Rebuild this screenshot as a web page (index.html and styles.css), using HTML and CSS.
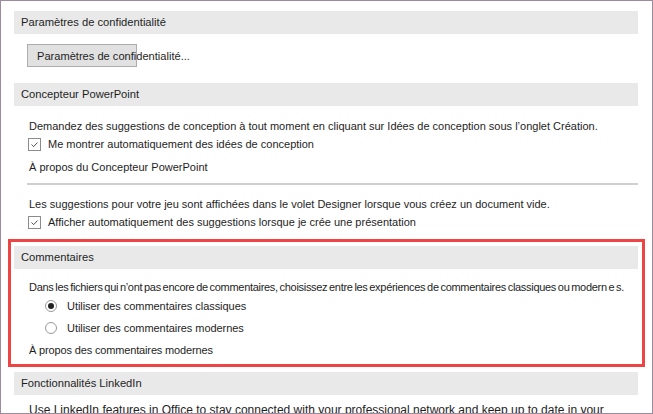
FILE: index.html
```html
<!DOCTYPE html>
<html lang="fr">
<head>
<meta charset="utf-8">
<title>Options</title>
<link rel="stylesheet" href="styles.css">
</head>
<body>
<div class="window">
  <section class="group group-privacy">
    <div class="group-header">Paramètres de confidentialité</div>
    <div class="btn">Paramètres de confidentialité...</div>
  </section>

  <section class="group group-designer">
    <div class="group-header">Concepteur PowerPoint</div>
    <p class="row row-first">Demandez des suggestions de conception à tout moment en cliquant sur Idées de conception sous l’onglet Création.</p>
    <div class="row check-row">
      <span class="checkbox"><svg viewBox="0 0 13 13" width="13" height="13"><path d="M3 6.5 L5.5 9 L10 4.2" fill="none" stroke="#333" stroke-width="1"/></svg></span>
      <span>Me montrer automatiquement des idées de conception</span>
    </div>
    <p class="row row-link">À propos du Concepteur PowerPoint</p>
    <div class="divider"></div>
    <p class="row row-after-divider">Les suggestions pour votre jeu sont affichées dans le volet Designer lorsque vous créez un document vide.</p>
    <div class="row check-row">
      <span class="checkbox"><svg viewBox="0 0 13 13" width="13" height="13"><path d="M3 6.5 L5.5 9 L10 4.2" fill="none" stroke="#333" stroke-width="1"/></svg></span>
      <span>Afficher automatiquement des suggestions lorsque je crée une présentation</span>
    </div>
  </section>

  <section class="group highlight">
    <div class="group-header">Commentaires</div>
    <p class="row row-first condensed">Dans les fichiers qui n’ont pas encore de commentaires, choisissez entre les expériences de commentaires classiques ou modern e s.</p>
    <div class="row radio-row radio-first">
      <span class="radio radio-on"></span>
      <span class="radio-label">Utiliser des commentaires classiques</span>
    </div>
    <div class="row radio-row">
      <span class="radio"></span>
      <span class="radio-label">Utiliser des commentaires modernes</span>
    </div>
    <p class="row row-link radio-about">À propos des commentaires modernes</p>
  </section>

  <section class="group group-linkedin">
    <div class="group-header">Fonctionnalités LinkedIn</div>
    <p class="row row-linkedin">Use LinkedIn features in Office to stay connected with your professional network and keep up to date in your</p>
  </section>
</div>
</body>
</html>
```

FILE: styles.css
```css
* { box-sizing: border-box; }

html, body {
  margin: 0;
  padding: 0;
  background: #ffffff;
}

.window {
  width: 653px;
  height: 414px;
  border: 1px solid #9d8b9d;
  overflow: hidden;
  padding: 10px 14px 0 13px;
  font-family: "Liberation Sans", Arial, sans-serif;
  font-size: 11px;
  color: #1e1e1e;
  background: #ffffff;
}

.group {
  display: flex;
  flex-direction: column;
}

.group-header {
  height: 23px;
  line-height: 23px;
  padding-left: 7px;
  background: #e9e9e9;
  color: #1e1e1e;
  font-size: 11.2px;
  white-space: nowrap;
}

.row {
  margin: 0;
  height: 18px;
  line-height: 18px;
  padding-left: 15px;
  white-space: nowrap;
}

.row-first { margin-top: 11px; }

.btn {
  margin: 10px 0 0 13px;
  width: 110px;
  height: 23px;
  line-height: 22px;
  padding-left: 9px;
  font-size: 11.1px;
  background: #e1e1e1;
  border: 1px solid #adadad;
  white-space: nowrap;
  overflow: visible;
}

.group-designer { margin-top: 16px; }

.check-row {
  display: flex;
  align-items: center;
  padding-left: 14px;
}

.checkbox {
  width: 13px;
  height: 13px;
  border: 1px solid #8c8c8c;
  background: #fff;
  margin-right: 7px;
  display: flex;
  align-items: center;
  justify-content: center;
  flex: none;
}

.checkbox svg {
  display: block;
  width: 11px;
  height: 11px;
}

.row-link { margin-top: 5px; }

.divider {
  margin: 7px 0 0 13px;
  height: 2px;
  background: #cfcfcf;
}

.row-after-divider { margin-top: 10px; }

.highlight {
  margin: 8px -7px 0 -6px;
  border: 3px solid #ee4444;
  padding: 4px 4px 5px 3px;
}

.highlight .row-first { margin-top: 9px; }

.condensed {
  font-size: 11px;
  letter-spacing: -0.3px;
  word-spacing: -1px;
}

.radio-row {
  display: flex;
  align-items: center;
  padding-left: 31px;
}

.radio-first { margin-top: 1px; }
.radio-row + .radio-row { margin-top: 4px; }

.radio {
  width: 12px;
  height: 12px;
  border-radius: 50%;
  border: 1px solid #9a9a9a;
  background: #fff;
  margin-right: 10px;
  display: flex;
  align-items: center;
  justify-content: center;
  flex: none;
}

.radio-on::after {
  content: "";
  width: 6px;
  height: 6px;
  border-radius: 50%;
  background: #222;
}

.radio-label {
  letter-spacing: -0.05px;
}

.radio-about {
  margin-top: 4px;
  letter-spacing: -0.15px;
}

.group-linkedin { margin-top: 5px; }

.row-linkedin {
  margin-top: 6px;
  font-size: 12px;
}
```
